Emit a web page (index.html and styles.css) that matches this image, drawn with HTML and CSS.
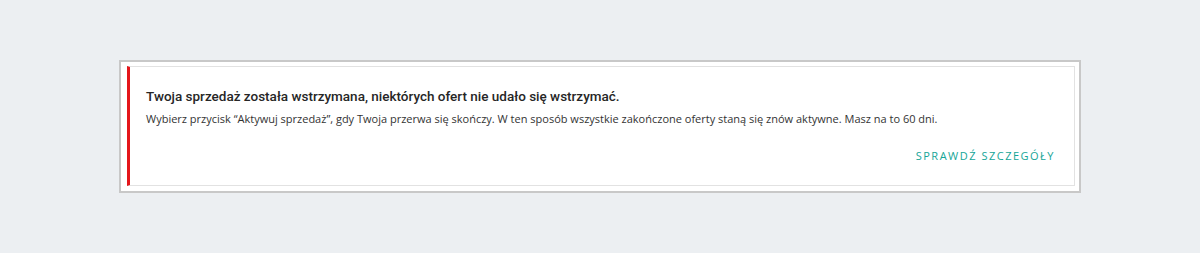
FILE: index.html
```html
<!DOCTYPE html>
<html lang="pl">
<head>
  <meta charset="UTF-8">
  <title>Sprzedaż wstrzymana</title>
  <link rel="stylesheet" href="styles.css">
</head>
<body>
  <div class="frame">
    <div class="notice">
      <h2 class="notice-title">Twoja sprzedaż została wstrzymana, niektórych ofert nie udało się wstrzymać.</h2>
      <p class="notice-text">Wybierz przycisk “Aktywuj sprzedaż”, gdy Twoja przerwa się skończy. W ten sposób wszystkie zakończone oferty staną się znów aktywne. Masz na to 60 dni.</p>
      <div class="notice-actions">
        <a href="#" class="notice-link">Sprawdź szczegóły</a>
      </div>
    </div>
  </div>
</body>
</html>
```

FILE: styles.css
```css
body {
  margin: 0;
  padding: 60px 0 0;
  background: #eceff2;
  font-family: "Open Sans", Arial, sans-serif;
  color: #222;
}

.frame {
  width: 962px;
  box-sizing: border-box;
  margin: 0 auto;
  background: #fff;
  border: 2px solid #c8c8c8;
  padding: 4px 4px 5px 6px;
}

.notice {
  height: 120px;
  box-sizing: border-box;
  border: 1px solid #e2e2e2;
  border-left: 3px solid #e4161b;
  padding: 19px 19px 0 16px;
}

.notice-title {
  margin: 0;
  font-family: Roboto, Arial, sans-serif;
  font-weight: 500;
  font-size: 13.5px;
  line-height: 20px;
  color: #262626;
}

.notice-text {
  margin: 4px 0 0;
  font-size: 11px;
  line-height: 18px;
  color: #333;
}

.notice-actions {
  display: flex;
  justify-content: flex-end;
  margin-top: 19px;
}

.notice-link {
  font-size: 11px;
  line-height: 18px;
  letter-spacing: 1.5px;
  text-transform: uppercase;
  text-decoration: none;
  color: #15a597;
}
```
